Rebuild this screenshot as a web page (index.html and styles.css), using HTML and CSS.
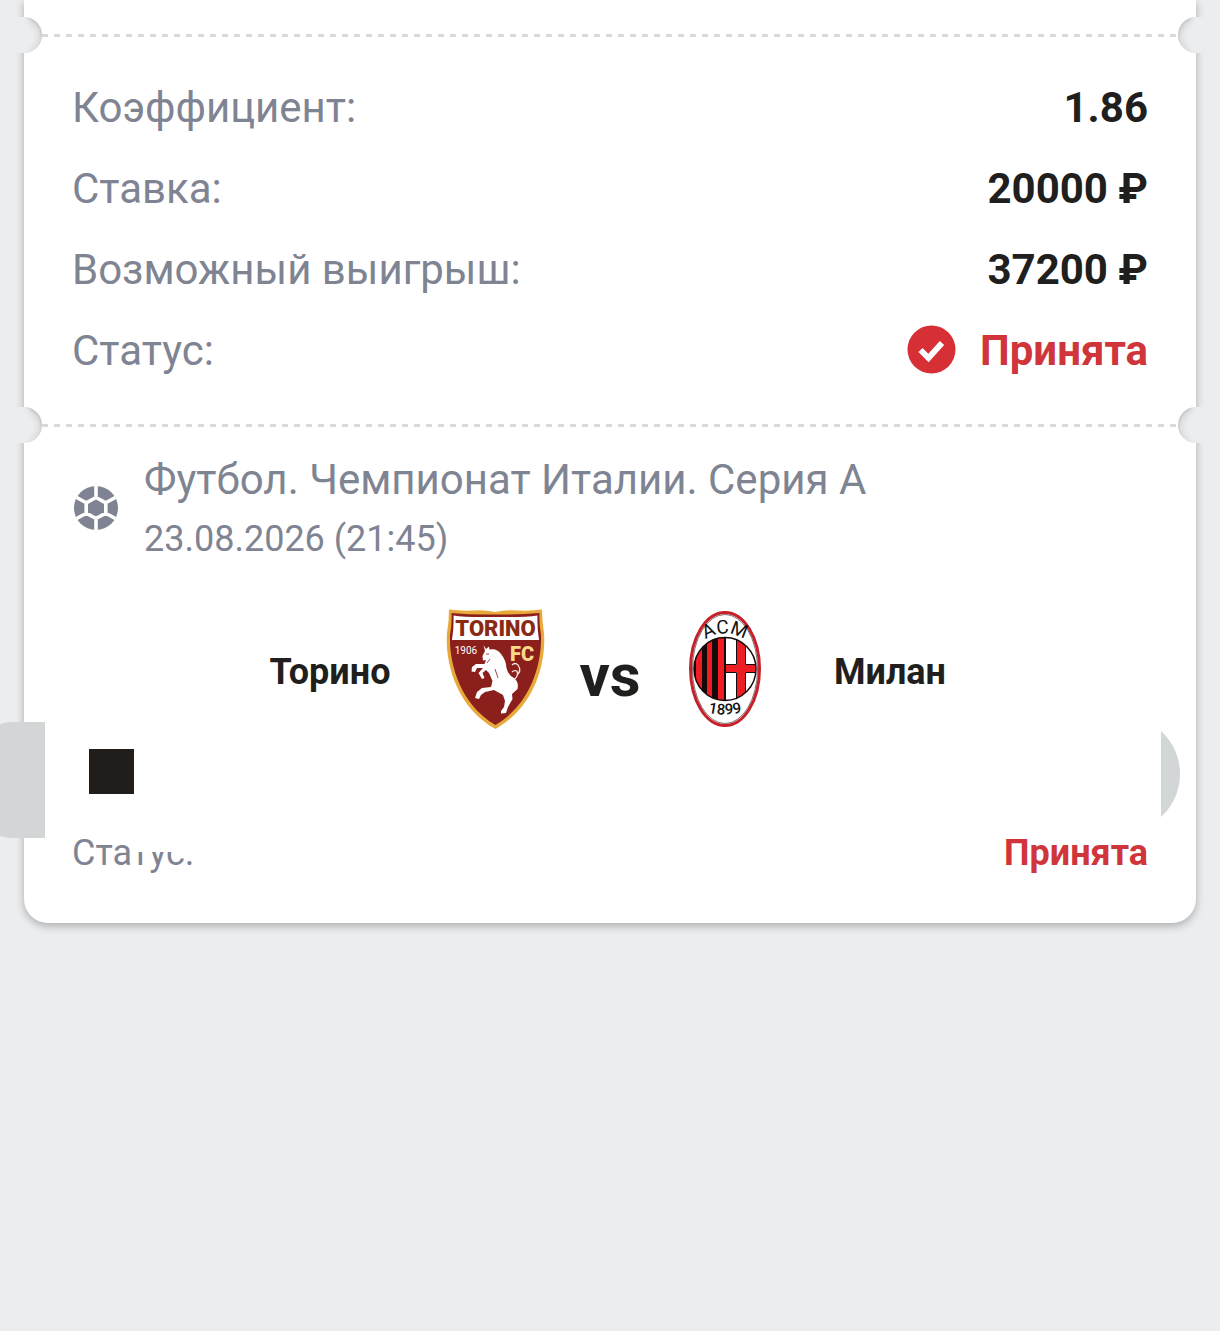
FILE: index.html
```html
<!DOCTYPE html>
<html lang="ru">
<head>
  <meta charset="UTF-8">
  <meta name="viewport" content="width=device-width, initial-scale=1">
  <title>Ставка</title>
  <link rel="stylesheet" href="styles.css">
</head>
<body>
  <main class="ticket">
    <div class="divider"></div>

    <dl class="summary">
      <div class="row">
        <dt>Коэффициент:</dt>
        <dd>1.86</dd>
      </div>
      <div class="row">
        <dt>Ставка:</dt>
        <dd>20000 ₽</dd>
      </div>
      <div class="row">
        <dt>Возможный выигрыш:</dt>
        <dd>37200 ₽</dd>
      </div>
      <div class="row">
        <dt>Статус:</dt>
        <dd class="status">
          <svg class="check" viewBox="0 0 48 48" aria-hidden="true">
            <circle cx="23.500" cy="22.500" r="24" fill="#d63036"/>
            <path d="M12.500 23l8 8L34 16" fill="none" stroke="#fff" stroke-width="5.800"/>
          </svg>
          Принята
        </dd>
      </div>
    </dl>

    <div class="divider"></div>

    <section class="event">
      <header class="tournament">
        <svg class="ball" viewBox="0 0 48 48" aria-hidden="true">
          <circle cx="24" cy="24" r="22" fill="#7f8493"/>
          <path d="M24 13.500l9.800 5.300v10.400L24 34.500l-9.800-5.300V18.800zM24 0v13.500M33.800 18.800L46 12M33.800 29.200L46 36M24 34.500V48M14.200 29.200L2 36M14.200 18.800L2 12" fill="none" stroke="#fff" stroke-width="3.600"/>
        </svg>
        <div class="info">
          <h1>Футбол. Чемпионат Италии. Серия А</h1>
          <time datetime="2026-08-23T21:45">23.08.2026 (21:45)</time>
        </div>
      </header>

      <div class="teams">
        <span class="team">Торино</span>
        <svg class="logo" viewBox="0 0 120 120" aria-hidden="true">
          <path d="M14 .500Q24 2 38 1.500Q48 .500 60 3Q72 .500 84 1.500Q96 2 107 .500Q107 12 109 24C111 52 101 97 60.500 120C20 97 10 52 12 24Q14 12 14 .500z" fill="#e9a93a"/>
          <path d="M16.500 4Q37 6 60 5.500Q84 6 104.500 4Q104 15 106 26C107 51 98 94 60.500 116C23 94 14 51 15 26Q17 15 16.500 4z" fill="#8a1f1c"/>
          <path d="M18.500 6.500Q30 8.500 60 8Q90 8.500 102.500 6.500Q102 18 104 31H17Q19 18 18.500 6.500z" fill="#fff"/>
          <text class="torino-name" x="60.500" y="27">TORINO</text>
          <text class="torino-year" x="31" y="45">1906</text>
          <text class="torino-fc" x="87" y="52">FC</text>
          <path d="M48.500 36L51 40L54 37.500L54.500 40.500Q62 39 66 45Q71 51 71.500 59Q73 66 79 69Q84 73 82.500 80L77 85L77.500 90L73 98L71 104L66 104.500L66 102L69 98L70 92L68 86L59 81L50 83L46 86L44 90L40 89L42 83L47 79L56 78L57.500 72L54 64L51 61L47.500 64L49.500 69L47 70L43.500 64L48 59L42 59L40 63L36.500 62.500L37 58L41 55L49.500 55L51 51L48 51.500L47.500 47L50 42z" fill="#fff"/>
          <path d="M78 71Q84 68 82 62Q79 61 77 63M82 66Q87 62 83 56Q80 53 77 56" fill="none" stroke="#f5e9e6" stroke-width="1.300"/>
          <path d="M51 45h3M55 50l-3 4M60 60l3 9" fill="none" stroke="#8a1f1c" stroke-width=".800"/>
        </svg>
        <span class="versus">vs</span>
        <svg class="logo" viewBox="0 0 120 120" aria-hidden="true">
          <defs>
            <clipPath id="milan-shield"><ellipse cx="60" cy="60" rx="31" ry="31.500"/></clipPath>
            <path id="arc-top" d="M33 36Q60 13 87 36"/>
            <path id="arc-bottom" d="M34 101Q60 110 86 101"/>
          </defs>
          <ellipse cx="60" cy="60" rx="34.500" ry="56.500" fill="#fff" stroke="#c8202b" stroke-width="3"/>
          <ellipse cx="60" cy="60" rx="32.500" ry="54.500" fill="none" stroke="#351416" stroke-width=".600"/>
          <g clip-path="url(#milan-shield)">
            <path d="M28 28h32v64H28z" fill="#ee1c23"/>
            <path d="M28 28h3v64h-3zM37 28h5v64h-5zM47 28h6v64h-6zM59 28h2v64h-2z" fill="#16090a"/>
            <path d="M61 28h32v64H61z" fill="#fff"/>
            <path d="M72 28h8v64h-8zM61 56h32v7H61z" fill="#ee1c23"/>
            <path d="M61 55.500h10.500V28M80.500 28v27.500H93M93 63.500H80.500V92M71.500 92V63.500H61" fill="none" stroke="#16090a"/>
          </g>
          <ellipse cx="60" cy="60" rx="31" ry="31.500" fill="none" stroke="#16090a" stroke-width="1.500"/>
          <text class="milan-name"><textPath href="#arc-top" startOffset="50%">ACM</textPath></text>
          <text class="milan-year"><textPath href="#arc-bottom" startOffset="50%">1899</textPath></text>
        </svg>
        <span class="team">Милан</span>
      </div>

      <div class="outcome">
        <span class="marker"></span>
        <span class="edge edge-left"></span>
        <span class="edge edge-right"></span>
      </div>

      <div class="row result">
        <span class="label">Статус:</span>
        <strong class="value">Принята</strong>
      </div>
    </section>
  </main>
</body>
</html>
```
FILE: styles.css
```css
* {
  box-sizing: border-box;
}

body {
  margin: 0;
  padding: 0 24px 48px;
  background: #ebedef;
  color: #211f1e;
  font-family: Roboto, sans-serif;
  font-size: 42px;
  line-height: 48px;
}

.ticket {
  padding: 17px 0 49px;
  background: #fff;
  border-radius: 0 0 24px 24px;
  box-shadow: 0 3px 8px rgba(0, 0, 0, 0.28);
}

/* tear-off line */
.divider {
  position: relative;
  height: 36px;
  margin: 0 18px;
  background: repeating-linear-gradient(90deg, #d9d9d9 0 6px, transparent 6px 12px) center / 100% 3px no-repeat;
}

.divider::before,
.divider::after {
  content: "";
  position: absolute;
  top: 0;
  width: 26px;
  height: 36px;
}

.divider::before {
  right: 100%;
  border-radius: 0 18px 18px 0;
  background:
    linear-gradient(90deg, #ebedef 8px, transparent 16px),
    radial-gradient(circle at 6px 20px, #ebedef 11px, #dfe0e2 17px, #c2c3c4 21px);
}

.divider::after {
  left: 100%;
  border-radius: 18px 0 0 18px;
  background:
    linear-gradient(270deg, #ebedef 8px, transparent 16px),
    radial-gradient(circle at 20px 20px, #ebedef 11px, #dfe0e2 17px, #c2c3c4 21px);
}

.summary {
  display: flex;
  flex-direction: column;
  gap: 33px;
  margin: 0;
  padding: 31px 48px 32px;
}

.row {
  display: flex;
  justify-content: space-between;
}

dt {
  color: #7f8493;
}

dd {
  margin: 0;
  font-weight: 700;
}

.status {
  display: flex;
  align-items: center;
  gap: 24px;
  color: #cf353b;
}

.check,
.ball {
  flex: none;
  width: 48px;
  height: 48px;
  overflow: visible;
}

.event {
  padding: 13px 48px 0;
}

.tournament {
  display: flex;
  align-items: center;
  gap: 24px;
  color: #7f8493;
}

.info {
  display: flex;
  flex-direction: column;
  gap: 14px;
}

h1 {
  margin: 0;
  font-size: 42px;
  font-weight: 400;
}

time {
  font-size: 36px;
  line-height: 42px;
}

.teams {
  display: flex;
  align-items: center;
  justify-content: center;
  margin-top: 49px;
  font-weight: 700;
  text-align: center;
}

.team {
  width: 210px;
  padding-top: 6px;
  font-size: 36px;
  line-height: 42px;
}

.logo {
  flex: none;
  width: 120px;
  height: 120px;
}

.versus {
  width: 110px;
  padding-top: 14px;
  font-size: 60px;
}

.torino-name,
.torino-year,
.torino-fc,
.milan-name,
.milan-year {
  font-family: Roboto, sans-serif;
  text-anchor: middle;
}

.torino-name {
  fill: #8a2a14;
  font-size: 22px;
  font-weight: 900;
}

.torino-year {
  fill: #fff;
  font-size: 10px;
  font-weight: 400;
}

.torino-fc {
  fill: #fbd98a;
  font-size: 20px;
  font-weight: 900;
}

.milan-name {
  fill: #111;
  font-size: 19px;
  font-weight: 400;
}

.milan-year {
  fill: #111;
  font-size: 15px;
  font-weight: 500;
}

.outcome {
  position: relative;
  margin-top: 20px;
  padding-left: 17px;
}

.marker {
  display: block;
  width: 45px;
  height: 45px;
  background: #211d1b;
}

/* carousel handles peeking from the sides */
.edge {
  position: absolute;
  background: #d2d6d7;
}

.edge-left {
  top: -27px;
  left: -72px;
  width: 45px;
  height: 116px;
  border-radius: 14px 0 0 14px / 3px 0 0 3px;
}

.edge-right {
  top: -33px;
  right: -32px;
  width: 116px;
  height: 116px;
  border-radius: 50%;
  clip-path: inset(0 0 0 97px);
}

.result {
  margin-top: 38px;
  font-size: 36px;
  line-height: 42px;
}

.label {
  position: relative;
  color: #7f8493;
}

.label::after {
  content: "";
  position: absolute;
  inset: 0 0 22px 59px;
  background: #fff;
}

.value {
  color: #cf353b;
}
```
